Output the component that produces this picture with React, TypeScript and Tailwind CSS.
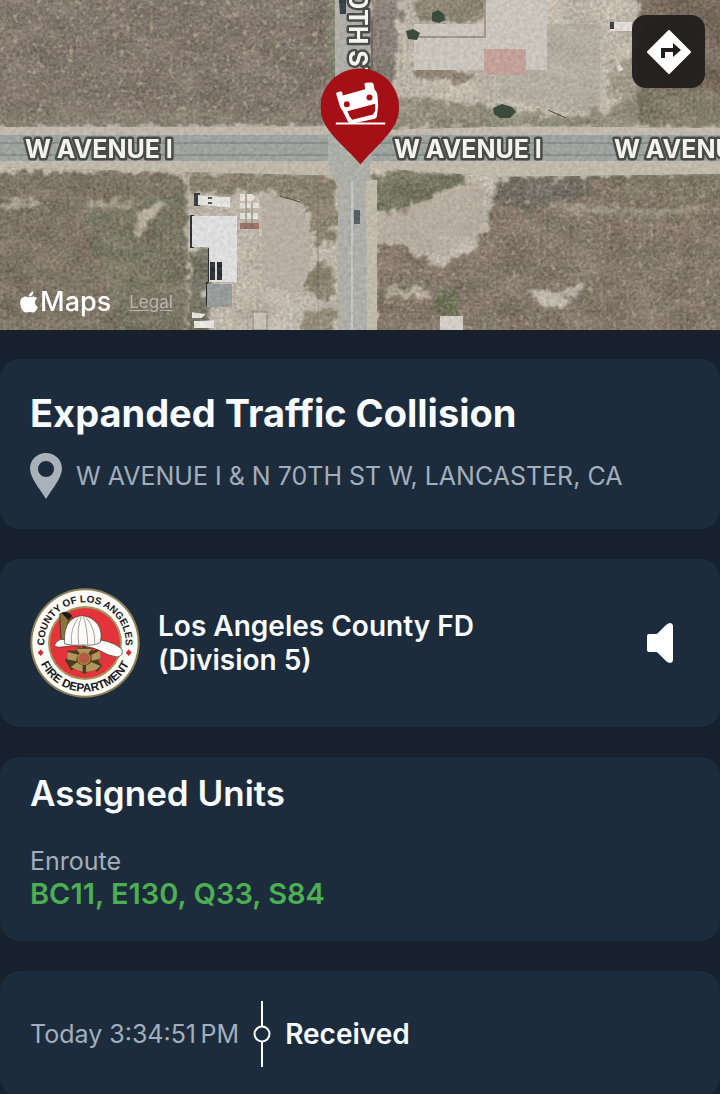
import type { ReactNode } from 'react';
import { FaApple } from 'react-icons/fa';

const UNITS = ['BC11', 'E130', 'Q33', 'S84'];

const ROAD_LABELS = [
  { text: 'W AVENUE I', x: 25 },
  { text: 'W AVENUE I', x: 394 },
  { text: 'W AVENUE I', x: 614 },
];

function SatelliteMap() {
  return (
    <svg
      viewBox="0 0 720 330"
      preserveAspectRatio="xMidYMid slice"
      className="block h-[330px] w-full"
      role="img"
      aria-label="Satellite map"
    >
      <defs>
        {/* ragged edges plus two layers of grain, so flat fills read as terrain */}
        <filter id="terrain" x="-20" y="-20" width="760" height="370" filterUnits="userSpaceOnUse" colorInterpolationFilters="sRGB">
          <feTurbulence type="fractalNoise" baseFrequency="0.09" numOctaves="4" seed="4" result="edge" />
          <feDisplacementMap in="SourceGraphic" in2="edge" scale="20" xChannelSelector="R" yChannelSelector="G" result="ragged" />
          <feGaussianBlur in="ragged" stdDeviation="1" result="shape" />
          <feTurbulence type="fractalNoise" baseFrequency="0.3" numOctaves="3" seed="11" />
          <feColorMatrix values="0.5 0.5 0 0 0  0.5 0.5 0 0 0  0.5 0.5 0 0 0  0 0 0 0 1" result="fine" />
          <feTurbulence type="fractalNoise" baseFrequency="0.03 0.05" numOctaves="4" seed="7" />
          <feColorMatrix values="0.9 0.1 0 0 0  0.8 0.2 0 0 0.02  0.8 0.2 0 0 0.04  0 0 0 0 1" result="coarse" />
          <feComposite in="shape" in2="fine" operator="arithmetic" k2="1" k3="0.34" k4="-0.15" result="a" />
          <feComposite in="a" in2="coarse" operator="arithmetic" k2="1" k3="0.18" k4="-0.08" result="b" />
          <feComposite in="b" in2="shape" operator="in" />
        </filter>
        <filter id="surface" x="-20" y="-20" width="760" height="370" filterUnits="userSpaceOnUse" colorInterpolationFilters="sRGB">
          <feTurbulence type="fractalNoise" baseFrequency="0.25" numOctaves="3" seed="2" />
          <feColorMatrix values="1 0 0 0 0  1 0 0 0 0  1 0 0 0 0  0 0 0 0 1" result="noise" />
          <feComposite in="SourceGraphic" in2="noise" operator="arithmetic" k2="1" k3="0.14" k4="-0.07" result="mix" />
          <feComposite in="mix" in2="SourceGraphic" operator="in" />
        </filter>
        <filter id="specks" x="0" y="0" width="720" height="330" filterUnits="userSpaceOnUse" colorInterpolationFilters="sRGB">
          <feTurbulence type="fractalNoise" baseFrequency="0.16" numOctaves="3" seed="21" />
          <feColorMatrix values="0 0 0 0 0.72  0 0 0 0 0.67  0 0 0 0 0.59  5 0 0 0 -3" />
          <feComposite in2="SourceGraphic" operator="in" />
        </filter>
      </defs>

      <g filter="url(#terrain)">
        <rect x="-60" y="-60" width="840" height="450" fill="#b5ac9f" />
        {/* north-west field */}
        <path d="M-60 -60H338V122L320 126H-60Z" fill="#7a6e63" />
        <path d="M-60 112H340V124H-60Z" fill="#80796a" />
        <path d="M328 -60H340V130H326Z" fill="#7b7a68" />
        {/* north-east lot */}
        <path d="M368 -60H404L396 60L384 110H368Z" fill="#80776d" />
        <path d="M412 -60H486V22H420Z" fill="#887d6c" />
        <path d="M400 96L440 100L560 116L610 110L640 88V128H380Z" fill="#898573" />
        <path d="M410 62L450 66L476 78L474 84L440 80L416 78Z" fill="#887c6d" />
        <path d="M606 70L640 50V100L610 98Z" fill="#989080" />
        <path d="M638 -60H780V126H636Z" fill="#716456" />
        <path d="M640 90H780V126H640Z" fill="#7c7562" />
        {/* south-west field */}
        <path d="M-60 172H170L186 180V390H-60Z" fill="#776c5c" />
        <path d="M80 216L140 200L186 184V390H130L110 290Z" fill="#6f6c59" />
        <path d="M132 232L142 210L158 200L166 204L150 220L140 236Z" fill="#b4a998" />
        <path d="M0 200L40 198L44 206L0 208Z" fill="#a39a89" />
        <path d="M92 200H134V206H92Z" fill="#9a917f" />
        <path d="M170 172H320L336 186L340 220L330 246L312 238L308 210L268 192H190V176Z" fill="#847a67" />
        <path d="M190 248H208V390H186Z" fill="#6e6d5c" />
        <path d="M310 268L330 264L336 290L322 300L308 290Z" fill="#857b68" />
        <path d="M304 312L334 308V390H300Z" fill="#8e8370" />
        {/* south-east field */}
        <path d="M374 178L400 168L450 172L468 180L440 194L400 212L376 212Z" fill="#71705a" />
        <path d="M496 177L780 172V390H376V244L400 246L420 258L444 268L470 252L488 232L492 200Z" fill="#7b6f60" />
        <path d="M500 177H600L590 196L520 210L494 202Z" fill="#6a655a" />
        <path d="M600 176L780 172V200L620 196Z" fill="#756e59" />
        <path d="M520 206H720V212L640 216Z" fill="#958a79" />
        <path d="M528 290L552 294L580 284L578 298L546 308Z" fill="#b1a99d" />
        <path d="M384 288H430V298H386Z" fill="#ada190" />
        <path d="M434 296L458 288L460 312L436 316Z" fill="#676a50" />
      </g>

      <g filter="url(#specks)">
        <path d="M0 0H330V112H0Z" fill="#fff" opacity="0.7" />
        <path d="M0 178H186V330H0Z" fill="#fff" opacity="0.3" />
        <path d="M496 180H720V330H384V262L470 262Z" fill="#fff" opacity="0.6" />
      </g>

      <g filter="url(#surface)">
        {/* dirt yards */}
        <path d="M262 196L300 200L312 240L308 276L300 292L262 286Z" fill="#b7ada2" />
        <path d="M500 24H600V110L560 112L500 96Z" fill="#b9b3a7" opacity="0.6" />
        <path d="M376 216L440 196L484 180L482 226L446 256L420 250L376 236Z" fill="#c2b5a8" opacity="0.7" />
        {/* roads */}
        <path d="M-20 127L340 126V176L180 172L-20 167Z" fill="#bdb8aa" />
        <path d="M368 130L520 126L740 128V174L500 177L372 168Z" fill="#beb9ab" />
        <path d="M335 -20H343V130H335Z" fill="#b3afa2" />
        <path d="M340 -20H370V350H338V190L330 170Z" fill="#adaea8" />
        <path d="M366 180H377V350H367Z" fill="#c0baab" />
        <path d="M-20 135H740V161H-20Z" fill="#9fa39f" />
        <path d="M-20 142H740V144H-20ZM-20 154H740V156H-20Z" fill="#898f8c" />
        <path d="M328 134H372V164H328Z" fill="#acaea8" />
        <path d="M351 180H353V350H351Z" fill="#c3c5c1" />
        <path d="M372 20V124" stroke="#6e6a63" strokeWidth="2" />
        <path d="M318 180V330M638 0V120M187 180V330" stroke="#756f64" strokeWidth="1" opacity="0.7" />
        {/* north-east slab */}
        <path d="M486 -20H547V70H414V24H486Z" fill="#c9c4bc" />
        <path d="M414 36H484V38H414ZM484 0H486V38H484Z" fill="#9d968b" />
        <path d="M484 49H526V75H484Z" fill="#c2a19a" />
        {/* south-west buildings */}
        <path d="M190 215H194V248H210V282H206V306H208V248H190Z" fill="#2e3032" />
        <path d="M192 216H237V282H209V247H192Z" fill="#dddddd" />
        <path d="M210 262H215V280H210ZM217 262H222V280H217Z" fill="#2f3338" />
        <path d="M207 284H232V307H207Z" fill="#989b9a" />
        <path d="M194 193H200V206H194Z" fill="#3c4044" />
        <path d="M198 195L230 197L231 208L198 205Z" fill="#e3e1dc" />
        <path d="M208 197H212V199H208ZM208 202H212V204H208Z" fill="#55585a" />
        <path d="M240 194H252L256 197L252 201H240ZM240 203H259V208H240ZM240 213H258V219H240Z" fill="#e3e0da" />
        <path d="M240 223H259V229H240Z" fill="#9a6f68" />
        <path d="M246 194V229M252 203V229" stroke="#77716a" strokeWidth="1" />
        <path d="M192 312L206 314L202 318H192ZM194 321L214 320V328H194Z" fill="#e6e4de" />
        <path d="M253 312H267V330H253Z" fill="#c6c0b6" stroke="#888175" strokeWidth="1" />
        <path d="M440 316H463V330H440Z" fill="#d2cdc5" />
        {/* vehicles */}
        <path d="M354 210H360V224H354Z" fill="#565d63" />
        <path d="M339 0H346V14H340Z" fill="#39434d" />
        <path d="M610 22H632V31H610Z" fill="#dedbd5" />
        <path d="M610 22H614V29H610Z" fill="#3c4044" />
        <path d="M616 66L620 64L624 70L618 72Z" fill="#d8d5ce" />
      </g>
      <g fill="#3b4b3c">
        <path d="M432 13L438 10L444 14L445 20L439 23L432 21Z" />
        <path d="M406 31L413 29L420 33L417 40L408 39Z" />
        <path d="M493 108L502 104L512 107L516 112L510 118L500 118L494 114Z" />
      </g>
      <path d="M548 110L566 118M280 196L300 202" stroke="#4c4940" strokeWidth="1" />

      <g
        fill="#f3f3ef"
        stroke="#4a4a48"
        strokeWidth="5"
        strokeLinejoin="round"
        paintOrder="stroke"
        fontSize="25"
        fontWeight="700"
        className="font-['Inter',sans-serif]"
      >
        {ROAD_LABELS.map((l) => (
          <text key={l.x} x={l.x} y="158">
            {l.text}
          </text>
        ))}
        <text transform="translate(349 -22) rotate(90)">70TH ST</text>
      </g>
    </svg>
  );
}

function IncidentPin() {
  return (
    <svg viewBox="17 205 237 290" className="h-[97px] w-[79px]" aria-hidden="true">
      <path d="M135 206C201 206 253 258 253 323C253 392 184 436 137 494C90 436 17 392 17 323C17 258 69 206 135 206Z" fill="#a51016" />
      <path
        fill="#fff"
        fillRule="evenodd"
        d="M64 282Q64 278 68 277L76 275Q81 274 82 278L84 287L151 268L149 254Q149 250 153 249L170 248Q175 248 176 253L179 268Q187 276 188 286L190 320L186 350Q185 355 180 357L118 370H106Q100 368 98 363L84 334Q77 326 74 316ZM98 334L104 349L112 360L175 344L181 332V312Z"
      />
      <circle cx="96" cy="313" r="9" fill="#a51016" />
      <circle cx="164" cy="293" r="9" fill="#a51016" />
      <path d="M63 371H211" stroke="#fff" strokeWidth="6" />
    </svg>
  );
}

function DirectionsIcon() {
  return (
    <svg viewBox="0 0 44 44" className="size-11" aria-hidden="true">
      <path d="M22 1L43 22L22 43L1 22Z" fill="#fff" stroke="#fff" strokeWidth="2" strokeLinejoin="round" />
      <path d="M16 28V20H28" fill="none" stroke="#211e1b" strokeWidth="4" />
      <path d="M26 13L34 20L26 27Z" fill="#211e1b" />
    </svg>
  );
}

function DepartmentSeal() {
  return (
    <svg viewBox="28 24 330 330" className="size-[110px] shrink-0" role="img" aria-label="County of Los Angeles Fire Department">
      <defs>
        <path id="seal-top" d="M71 209V189A122 122 0 0 1 315 189V209" />
        <path id="seal-bottom" d="M47 189A146 146 0 0 0 339 189" />
      </defs>
      <circle cx="193" cy="189" r="164" fill="#8f8158" />
      <circle cx="193" cy="189" r="158" fill="#fdfcf8" />
      <circle cx="193" cy="189" r="111" fill="#a8935d" />
      <circle cx="193" cy="189" r="105" fill="#e3343b" />
      <g fill="#17181c" fontWeight="700" textAnchor="middle" className="font-['Liberation_Sans',sans-serif]">
        <text fontSize="30">
          <textPath href="#seal-top" startOffset="50%">COUNTY OF LOS ANGELES</textPath>
        </text>
        <text fontSize="35">
          <textPath href="#seal-bottom" startOffset="50%">FIRE DEPARTMENT</textPath>
        </text>
      </g>
      <path d="M60 208L69 218L60 228L51 218ZM324 208L333 218L324 228L315 218Z" fill="#cf3138" />
      {/* helmet */}
      <path d="M117 102Q134 92 147 101L155 112L143 122L133 192L122 193Z" fill="#8c7440" stroke="#2b2419" strokeWidth="2" />
      <path d="M122 99Q140 92 154 108L143 120Z" fill="#1c1a18" />
      <path d="M102 196Q104 184 120 178Q180 186 240 180Q284 188 304 208Q310 226 290 231Q262 228 236 211Q190 190 122 201Q104 203 102 196Z" fill="#fcfbf7" stroke="#332a20" strokeWidth="2" />
      <path d="M132 192Q128 146 147 124Q162 109 184 107Q214 109 232 134Q246 156 239 187Q220 198 190 195Q160 198 132 192Z" fill="#fdfcf9" stroke="#3a332b" strokeWidth="2" />
      <path d="M152 192Q148 144 174 112M174 194Q168 144 182 110M201 194Q200 140 188 110M222 191Q226 148 196 112" fill="none" stroke="#77716a" strokeWidth="2" />
      {/* maltese cross */}
      <path d="M190 196L197 203L213 203L216 214L229 208L242 236L232 240L244 258L229 276L216 264L192 282L163 264L152 272L133 240L147 226L138 212L164 212L171 202L184 204Z" fill="#4a3b20" />
      <path d="M166 206H214L202 221Q190 212 178 221ZM142 216L173 224Q165 233 168 244L139 238ZM212 224L237 213L240 236L213 242ZM150 262L170 246Q176 254 186 256L186 276ZM196 256Q207 254 211 246L240 258L226 270L196 276Z" fill="#b0965a" />
      <circle cx="190" cy="235" r="18" fill="#b8593f" stroke="#a28849" strokeWidth="4" />
    </svg>
  );
}

function SpeakerIcon() {
  return (
    <svg viewBox="0 0 28 42" className="h-[42px] w-7" aria-hidden="true">
      <path d="M1 14Q1 12 3 12H10Q11 12 12 11L20 3Q22 1 24.500 1Q27 1.500 27 4V38Q27 40.500 24.500 41Q22 41 20 39L12 31Q11 30 10 30H3Q1 30 1 28Z" fill="#fff" />
    </svg>
  );
}

function PlaceIcon() {
  return (
    <svg viewBox="0 0 32 46" className="h-[46px] w-8 shrink-0" aria-hidden="true">
      <path fill="#a9b1bb" fillRule="evenodd" d="M16 0C25 0 32 7 32 15.500C32 25 22 36 16 46C10 36 0 25 0 15.500C0 7 7 0 16 0ZM16 8A8 8 0 1 0 16 24A8 8 0 1 0 16 8Z" />
    </svg>
  );
}

function Card({ className = '', children }: { className?: string; children: ReactNode }) {
  return <section className={`rounded-[20px] bg-[#1c2c3c] px-[30px] ${className}`}>{children}</section>;
}

export default function App() {
  return (
    <main className="h-screen overflow-y-auto bg-[#16212d] font-['Inter',sans-serif] text-[#f8fbff] [scrollbar-width:none]">
      <div className="relative overflow-hidden">
        <SatelliteMap />
        <div className="absolute left-1/2 top-[68px] -translate-x-1/2">
          <IncidentPin />
        </div>
        <button
          type="button"
          aria-label="Directions"
          className="absolute right-[15px] top-[15px] flex size-[73px] items-center justify-center rounded-[14px] bg-[#211e1b]/95"
        >
          <DirectionsIcon />
        </button>
        <div className="absolute bottom-3 left-5 flex items-center gap-[18px]">
          <span className="flex items-center gap-0.5 text-[27px] leading-8 font-medium text-white">
            <FaApple className="h-6 w-[18px]" />
            Maps
          </span>
          <a href="#legal" className="text-[17px] leading-8 text-[#b9b5ae] underline underline-offset-2">
            Legal
          </a>
        </div>
      </div>

      <div className="flex flex-col gap-[30px] pt-[29px]">
        <Card className="pt-8 pb-[30px]">
          <h1 className="text-[38px] leading-11 font-bold">Expanded Traffic Collision</h1>
          <div className="mt-[18px] flex items-center gap-[14px]">
            <PlaceIcon />
            <p className="text-[25px] leading-8 text-[#a3afbd]">W AVENUE I &amp; N 70TH ST W, LANCASTER, CA</p>
          </div>
        </Card>

        <Card className="flex items-center gap-[18px] py-[29px]">
          <DepartmentSeal />
          <h2 className="max-w-[360px] flex-1 text-[28px] leading-[34px] font-semibold">Los Angeles County FD (Division 5)</h2>
          <button type="button" aria-label="Play audio" className="mr-4 ml-auto">
            <SpeakerIcon />
          </button>
        </Card>

        <Card className="pt-[14px] pb-[30px]">
          <h2 className="text-[35px] leading-11 font-semibold">Assigned Units</h2>
          <p className="mt-[30px] text-[25px] leading-8 text-[#a3afbd]">Enroute</p>
          <p className="text-[29px] leading-[34px] font-semibold text-[#4caf50]">{UNITS.join(', ')}</p>
        </Card>

        <Card className="flex items-center py-[30px]">
          <time className="text-[25px] leading-8 text-[#a3afbd]">Today 3:34:51&#8201;PM</time>
          <svg viewBox="0 0 18 66" className="mx-[14px] h-[66px] w-[18px]" aria-hidden="true">
            <path d="M9 0V25M9 41V66" stroke="#fff" strokeWidth="2" />
            <circle cx="9" cy="33" r="7.500" fill="none" stroke="#fff" strokeWidth="2" />
          </svg>
          <p className="text-[28px] leading-[34px] font-semibold">Received</p>
        </Card>
      </div>
    </main>
  );
}
